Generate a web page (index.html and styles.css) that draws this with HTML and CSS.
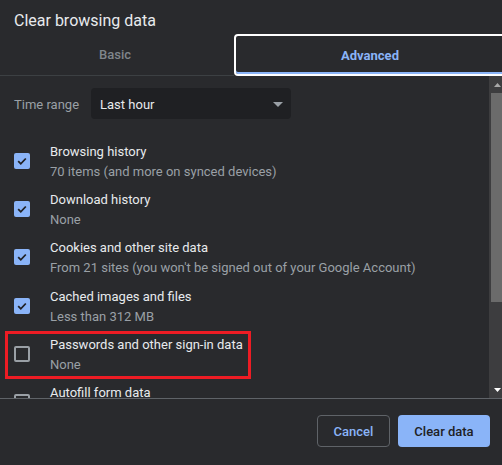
FILE: index.html
```html
<!DOCTYPE html>
<html lang="en">
<head>
<meta charset="utf-8">
<title>Clear browsing data</title>
<link rel="stylesheet" href="styles.css">
</head>
<body>
<div class="dialog">
  <div class="title">Clear browsing data</div>
  <div class="tabs">
    <div class="tab">Basic</div>
    <div class="tab active">Advanced</div>
  </div>
  <div class="body">
    <div class="content">
      <div class="range">
        <span class="range-label">Time range</span>
        <div class="select">
          <span>Last hour</span>
          <svg class="caret" width="10" height="5" viewBox="0 0 10 5"><path d="M0 0h10L5 5z" fill="#9aa0a6"/></svg>
        </div>
      </div>
      <div class="list">
        <div class="row">
          <span class="check on"><svg width="16" height="16" viewBox="0 0 16 16"><path d="M4.2 8.2l2.6 2.6 5-5.3" fill="none" stroke="#202124" stroke-width="1.8"/></svg></span>
          <div class="texts"><div class="label">Browsing history</div><div class="sub">70 items (and more on synced devices)</div></div>
        </div>
        <div class="row">
          <span class="check on"><svg width="16" height="16" viewBox="0 0 16 16"><path d="M4.2 8.2l2.6 2.6 5-5.3" fill="none" stroke="#202124" stroke-width="1.8"/></svg></span>
          <div class="texts"><div class="label">Download history</div><div class="sub">None</div></div>
        </div>
        <div class="row">
          <span class="check on"><svg width="16" height="16" viewBox="0 0 16 16"><path d="M4.2 8.2l2.6 2.6 5-5.3" fill="none" stroke="#202124" stroke-width="1.8"/></svg></span>
          <div class="texts"><div class="label">Cookies and other site data</div><div class="sub">From 21 sites (you won't be signed out of your Google Account)</div></div>
        </div>
        <div class="row">
          <span class="check on"><svg width="16" height="16" viewBox="0 0 16 16"><path d="M4.2 8.2l2.6 2.6 5-5.3" fill="none" stroke="#202124" stroke-width="1.8"/></svg></span>
          <div class="texts"><div class="label">Cached images and files</div><div class="sub">Less than 312 MB</div></div>
        </div>
        <div class="row highlight">
          <span class="check"></span>
          <div class="texts"><div class="label">Passwords and other sign-in data</div><div class="sub">None</div></div>
        </div>
        <div class="row">
          <span class="check"></span>
          <div class="texts"><div class="label">Autofill form data</div><div class="sub">None</div></div>
        </div>
      </div>
    </div>
    <div class="scrollbar">
      <div class="sb-btn"><svg width="7" height="4" viewBox="0 0 7 4"><path d="M0 4L3.5 0 7 4z" fill="#a8a8a8"/></svg></div>
      <div class="sb-track"><div class="sb-thumb"></div></div>
      <div class="sb-btn"><svg width="7" height="4" viewBox="0 0 7 4"><path d="M0 0h7L3.5 4z" fill="#ffffff"/></svg></div>
    </div>
  </div>
  <div class="footer">
    <button class="btn cancel">Cancel</button>
    <button class="btn primary">Clear data</button>
  </div>
</div>
</body>
</html>
```
FILE: styles.css
```css
html, body {
  margin: 0;
  padding: 0;
  background: #292a2d;
  overflow: hidden;
}
body {
  font-family: Roboto, "Liberation Sans", sans-serif;
  color: #e8eaed;
  font-size: 13px;
}
.dialog {
  width: 506px;
  height: 465px;
  background: #292a2d;
  display: flex;
  flex-direction: column;
}
.title {
  height: 34px;
  box-sizing: border-box;
  padding: 9px 0 0 14px;
  font-size: 16px;
  line-height: 24px;
  color: #e8eaed;
}
.tabs {
  display: flex;
  height: 42px;
}
.tab {
  width: 234px;
  box-sizing: border-box;
  display: flex;
  align-items: center;
  justify-content: center;
  font-weight: 500;
  font-size: 13px;
  color: #80868b;
  border-bottom: 1px solid #3c4043;
  padding-right: 4px;
}
.tab.active {
  width: 272px;
  color: #8ab4f8;
  font-weight: 700;
  border: 2px solid #ffffff;
  border-radius: 4px;
  box-shadow: inset 0 -2px 0 #8ab4f8;
  padding: 0;
}
.body {
  display: flex;
  height: 322px;
  overflow: hidden;
}
.content {
  width: 489px;
  overflow: hidden;
}
.range {
  display: flex;
  align-items: center;
  padding: 12px 0 0 14px;
  gap: 12px;
}
.range-label {
  color: #9aa0a6;
  font-size: 13px;
  padding-top: 2px;
}
.select {
  width: 200px;
  height: 31px;
  box-sizing: border-box;
  background: #1f2023;
  border-radius: 4px;
  display: flex;
  align-items: center;
  justify-content: space-between;
  padding: 1px 8px 0 9px;
  font-size: 13px;
  color: #e8eaed;
}
.list {
  padding-top: 18px;
}
.row {
  position: relative;
  height: 48.2px;
  display: flex;
  align-items: center;
  padding-left: 14px;
  gap: 20px;
}
.check {
  width: 16px;
  height: 16px;
  box-sizing: border-box;
  border: 2px solid #9aa0a6;
  border-radius: 2px;
  flex: none;
  display: flex;
}
.check.on {
  background: #8ab4f8;
  border: none;
}
.texts {
  line-height: 20px;
  padding-top: 2px;
}
.label {
  color: #e8eaed;
}
.sub {
  color: #9aa0a6;
}
.highlight::after {
  content: "";
  position: absolute;
  left: 5px;
  top: 1px;
  width: 246px;
  height: 48px;
  box-sizing: border-box;
  border: 3px solid #ed1c24;
}
.scrollbar {
  width: 17px;
  background: #3d3d3f;
  display: flex;
  flex-direction: column;
}
.sb-btn {
  height: 17px;
  display: flex;
  align-items: center;
  justify-content: center;
}
.sb-track {
  flex: 1;
  padding: 0 2px;
}
.sb-thumb {
  height: 209px;
  background: #6b6b6b;
}
.footer {
  border-top: 1px solid #5f6368;
  display: flex;
  justify-content: flex-end;
  gap: 8px;
  padding: 16px 16px 0 0;
  flex: 1;
}
.btn {
  height: 32px;
  border-radius: 4px;
  font-family: Roboto, "Liberation Sans", sans-serif;
  font-size: 13px;
  font-weight: 500;
  padding: 1px 0 0;
}
.cancel {
  width: 73px;
  background: transparent;
  border: 1px solid #5f6368;
  color: #8ab4f8;
}
.primary {
  width: 92px;
  background: #8ab4f8;
  border: none;
  color: #202124;
}
```
